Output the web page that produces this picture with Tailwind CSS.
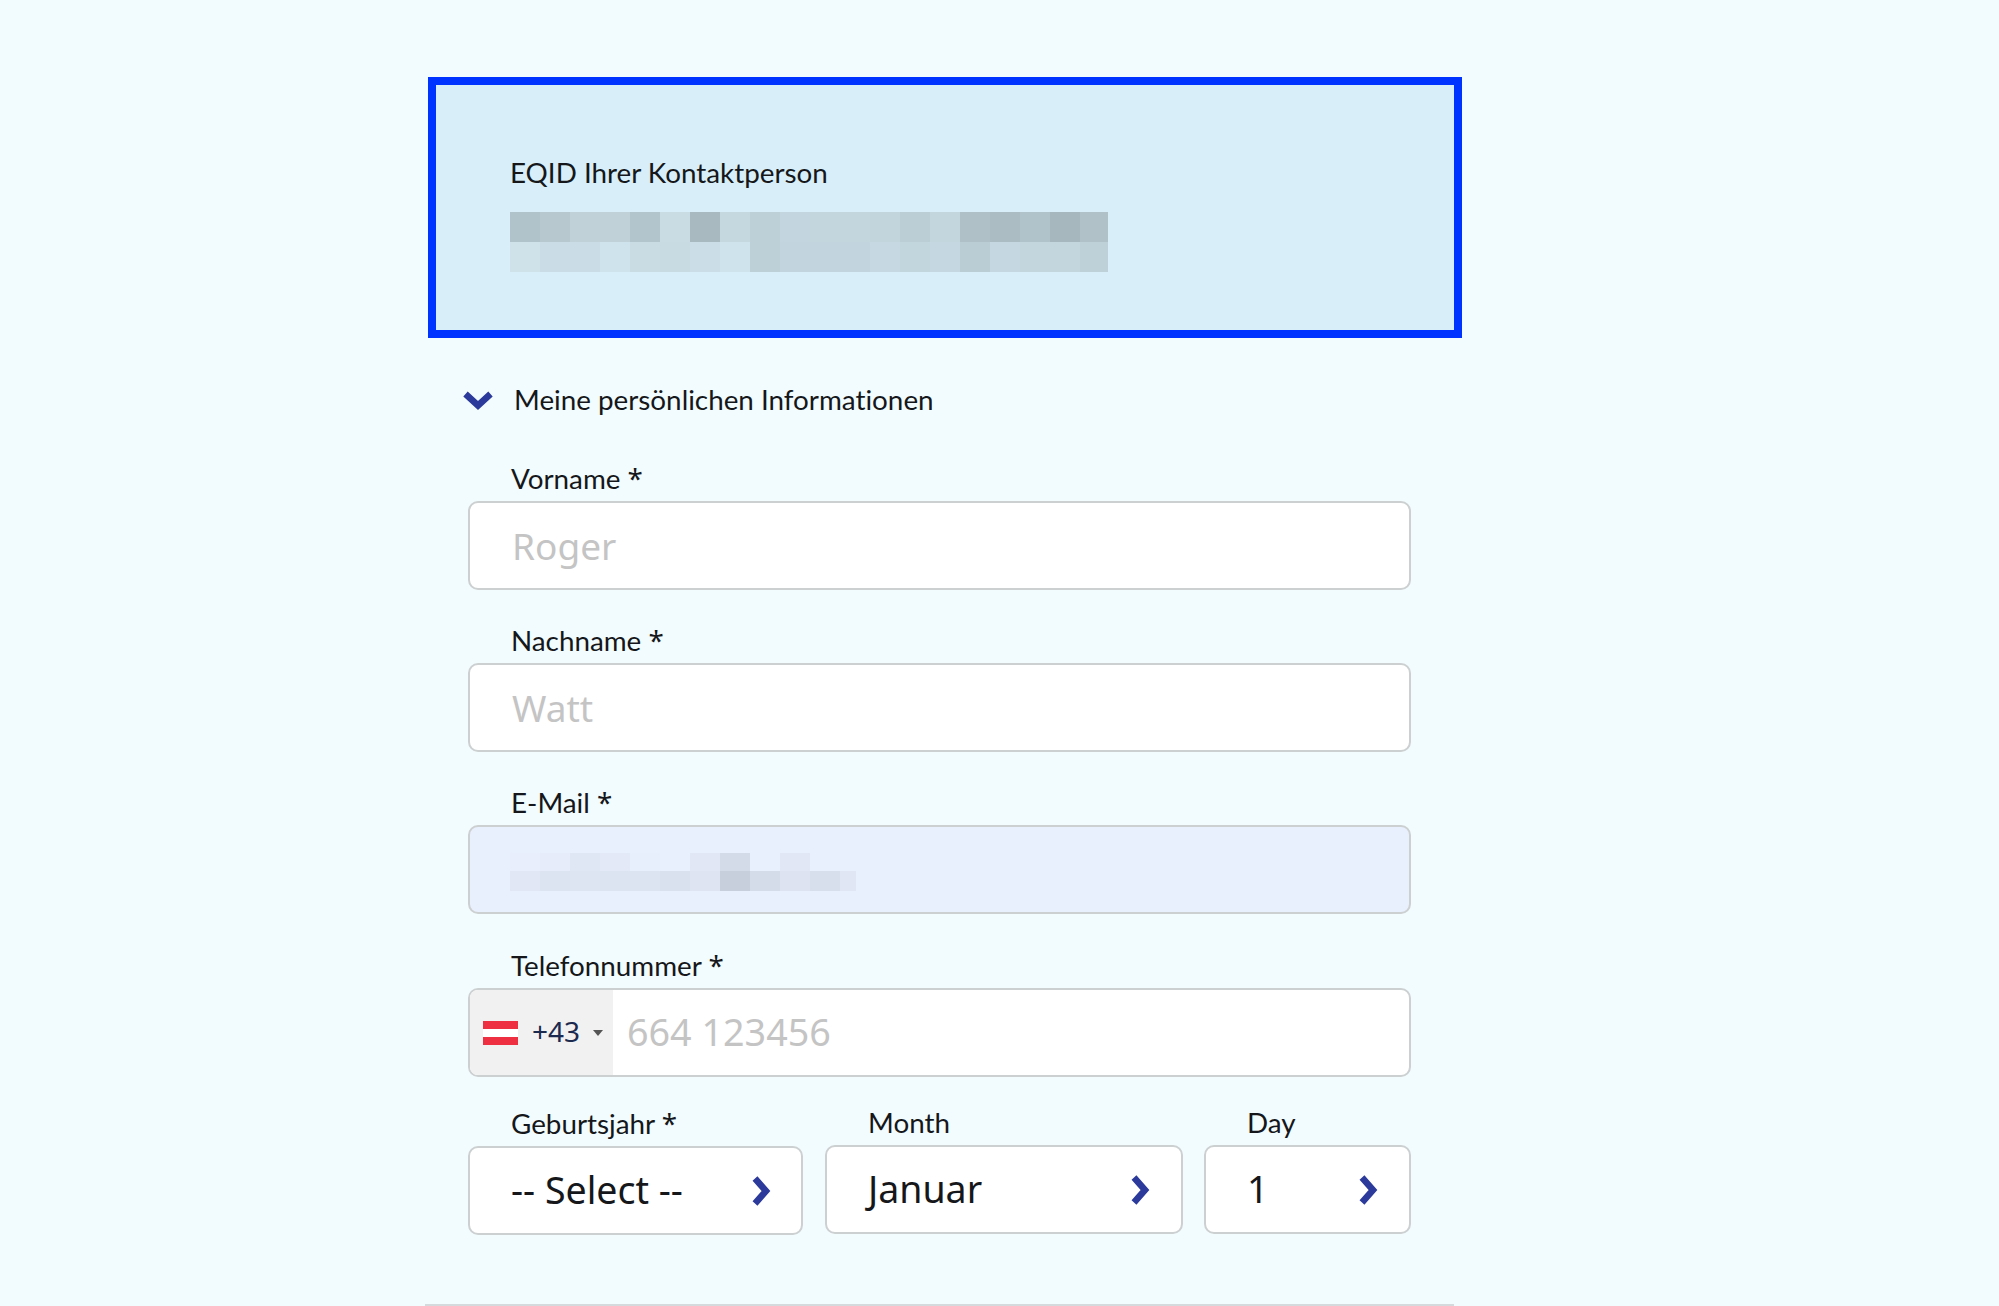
<!DOCTYPE html>
<html lang="de">
<head>
    <meta charset="UTF-8">
    <title>Meine persönlichen Informationen</title>
    <script src="https://cdn.jsdelivr.net/npm/@tailwindcss/browser@4"></script>
</head>
<body class="bg-[#f2fcfe] text-[#15171a] font-['Lato',sans-serif] [font-variant-ligatures:none] h-[1306px] overflow-hidden">
    <main class="w-[1034px] ml-[428px] pt-[77px]">

        <!-- Contact person box -->
        <section class="h-[261px] border-8 border-[#0033ff] bg-[#d8eff9] pl-[74px] pt-[70px]">
            <p class="text-[27.8px] leading-[36px] h-[36px]">EQID Ihrer Kontaktperson</p>
            <!-- Pixelated value -->
            <div class="mt-[21px] w-[598px] h-[60px] grid grid-cols-[repeat(19,30px)_28px] grid-rows-2">
                <i class="bg-[#b0c2ca]"></i><i class="bg-[#b7c9cf]"></i><i class="bg-[#c0d2d8]"></i><i class="bg-[#c0d2d8]"></i><i class="bg-[#b3c5cc]"></i>
                <i class="bg-[#c9dce3]"></i><i class="bg-[#a8b9c0]"></i><i class="bg-[#c5d8df]"></i><i class="bg-[#bdd0d7]"></i><i class="bg-[#c3d6df]"></i>
                <i class="bg-[#c3d6de]"></i><i class="bg-[#c3d6dd]"></i><i class="bg-[#c2d5dc]"></i><i class="bg-[#bbced5]"></i><i class="bg-[#c3d6dd]"></i>
                <i class="bg-[#afc0c7]"></i><i class="bg-[#abbcc3]"></i><i class="bg-[#b1c3ca]"></i><i class="bg-[#a6b7be]"></i><i class="bg-[#b0c1c8]"></i>
                <i class="bg-[#cfe2ea]"></i><i class="bg-[#cadde6]"></i><i class="bg-[#cadde6]"></i><i class="bg-[#cfe3ec]"></i><i class="bg-[#c9dce4]"></i>
                <i class="bg-[#c8dbe3]"></i><i class="bg-[#cbdee7]"></i><i class="bg-[#cfe3ed]"></i><i class="bg-[#bdd0d7]"></i><i class="bg-[#c2d5de]"></i>
                <i class="bg-[#c2d5de]"></i><i class="bg-[#c2d5de]"></i><i class="bg-[#c6d9e3]"></i><i class="bg-[#c2d6dd]"></i><i class="bg-[#c5d8e1]"></i>
                <i class="bg-[#bacdd4]"></i><i class="bg-[#c5d8e1]"></i><i class="bg-[#c3d6dd]"></i><i class="bg-[#c3d6dd]"></i><i class="bg-[#bed0d8]"></i>
            </div>
        </section>

        <!-- Section heading -->
        <div class="flex items-center h-[36px] mt-[44px] pl-[35px]">
            <svg class="w-[30px] h-[20px] text-[#2b3a9b]" viewBox="0 0 30 20" fill="none" stroke="currentColor" stroke-width="6.5">
                <path d="M2.5 4L15 15.5 27.5 4"/>
            </svg>
            <span class="ml-[21px] text-[27.8px] leading-[36px]">Meine persönlichen Informationen</span>
        </div>

        <form class="ml-[40px] w-[943px] mt-[42px]">
            <label class="block pl-[43px] text-[27.8px] leading-[36px] h-[36px]">Vorname <span class="font-['Noto_Sans',sans-serif]">*</span></label>
            <input type="text" placeholder="Roger" class="mt-[5px] block w-full h-[89px] rounded-[10px] border-2 border-[#cdd0d1] bg-white pl-[42px] text-[37px] font-['Noto_Sans',sans-serif] placeholder:text-[#c4c4c4]">

            <label class="block mt-[32px] pl-[43px] text-[27.8px] leading-[36px] h-[36px]">Nachname <span class="font-['Noto_Sans',sans-serif]">*</span></label>
            <input type="text" placeholder="Watt" class="mt-[5px] block w-full h-[89px] rounded-[10px] border-2 border-[#cdd0d1] bg-white pl-[42px] text-[37px] font-['Noto_Sans',sans-serif] placeholder:text-[#c4c4c4]">

            <label class="block mt-[32px] pl-[43px] text-[27.8px] leading-[36px] h-[36px]">E-Mail <span class="font-['Noto_Sans',sans-serif]">*</span></label>
            <div class="mt-[5px] h-[89px] rounded-[10px] border-2 border-[#cdd0d1] bg-[#e8effd] pl-[40px] pt-[26px]">
                <!-- Pixelated e-mail -->
                <div class="w-[346px] h-[38px] grid grid-cols-[repeat(11,30px)_16px] grid-rows-[18px_20px]">
                    <i class="bg-[#e8eefb]"></i><i class="bg-[#e6ecfa]"></i><i class="bg-[#dfe6f4]"></i><i class="bg-[#e3e9f7]"></i><i class="bg-[#e8effc]"></i><i class="bg-[#e8effd]"></i>
                    <i class="bg-[#e1e7f5]"></i><i class="bg-[#d3dae8]"></i><i class="bg-[#e8effd]"></i><i class="bg-[#e1e7f5]"></i><i class="bg-[#e8effd]"></i><i class="bg-[#e8effd]"></i>
                    <i class="bg-[#e1e7f4]"></i><i class="bg-[#dde4f1]"></i><i class="bg-[#dde4f2]"></i><i class="bg-[#dce3f1]"></i><i class="bg-[#dce3f1]"></i><i class="bg-[#dae1ee]"></i>
                    <i class="bg-[#dee4f1]"></i><i class="bg-[#c8cfdc]"></i><i class="bg-[#d5dce9]"></i><i class="bg-[#dde3f1]"></i><i class="bg-[#d8dfec]"></i><i class="bg-[#e0e6f3]"></i>
                </div>
            </div>

            <label class="block mt-[33px] pl-[43px] text-[27.8px] leading-[36px] h-[36px]">Telefonnummer <span class="font-['Noto_Sans',sans-serif]">*</span></label>
            <div class="mt-[5px] flex h-[89px] rounded-[10px] border-2 border-[#cdd0d1] bg-white overflow-hidden">
                <div class="w-[143px] bg-[#f1f1f1] flex items-center pl-[13px] shrink-0">
                    <div class="w-[35px] h-[24px] flex flex-col">
                        <i class="h-[8px] bg-[#ee2f42]"></i><i class="h-[8px] bg-white"></i><i class="h-[8px] bg-[#ee2f42]"></i>
                    </div>
                    <span class="ml-[14px] mb-[4px] text-[28px] text-[#1b2a4e] font-['Noto_Sans',sans-serif]">+43</span>
                    <span class="ml-[13px] w-0 h-0 border-x-[5px] border-x-transparent border-t-[6px] border-t-[#555]"></span>
                </div>
                <input type="tel" placeholder="664 123456" class="flex-1 pl-[14px] text-[37.7px] font-['Noto_Sans',sans-serif] placeholder:text-[#c4c4c4]">
            </div>

            <!-- Birth date -->
            <div class="mt-[28px] flex">
                <div class="w-[335px]">
                    <div class="pl-[43px] text-[27.8px] leading-[36px] h-[36px]">Geburtsjahr <span class="font-['Noto_Sans',sans-serif]">*</span></div>
                    <div class="mt-[5px] h-[89px] rounded-[10px] border-2 border-[#cdd0d1] bg-white flex items-center justify-between pl-[41px] pr-[30px] text-[37.5px] font-['Noto_Sans',sans-serif]">
                        <span>-- Select --</span>
                        <svg class="w-[20px] h-[30px] text-[#2b3a9b]" viewBox="0 0 20 30" fill="none" stroke="currentColor" stroke-width="6.5"><path d="M4 2.5L15 15 4 27.5"/></svg>
                    </div>
                </div>
                <div class="w-[358px] ml-[22px]">
                    <div class="pl-[43px] text-[27.8px] leading-[36px] h-[36px]">Month</div>
                    <div class="mt-[4px] h-[89px] rounded-[10px] border-2 border-[#cdd0d1] bg-white flex items-center justify-between pl-[41px] pr-[31px] text-[37.5px] font-['Noto_Sans',sans-serif]">
                        <span>Januar</span>
                        <svg class="w-[20px] h-[30px] text-[#2b3a9b]" viewBox="0 0 20 30" fill="none" stroke="currentColor" stroke-width="6.5"><path d="M4 2.5L15 15 4 27.5"/></svg>
                    </div>
                </div>
                <div class="w-[207px] ml-[21px]">
                    <div class="pl-[43px] text-[27.8px] leading-[36px] h-[36px]">Day</div>
                    <div class="mt-[4px] h-[89px] rounded-[10px] border-2 border-[#cdd0d1] bg-white flex items-center justify-between pl-[41px] pr-[31px] text-[37.5px] font-['Noto_Sans',sans-serif]">
                        <span>1</span>
                        <svg class="w-[20px] h-[30px] text-[#2b3a9b]" viewBox="0 0 20 30" fill="none" stroke="currentColor" stroke-width="6.5"><path d="M4 2.5L15 15 4 27.5"/></svg>
                    </div>
                </div>
            </div>
        </form>

        <hr class="mt-[69px] -ml-[3px] w-[1029px] border-t-2 border-[#d5dadc]">
    </main>
</body>
</html>
